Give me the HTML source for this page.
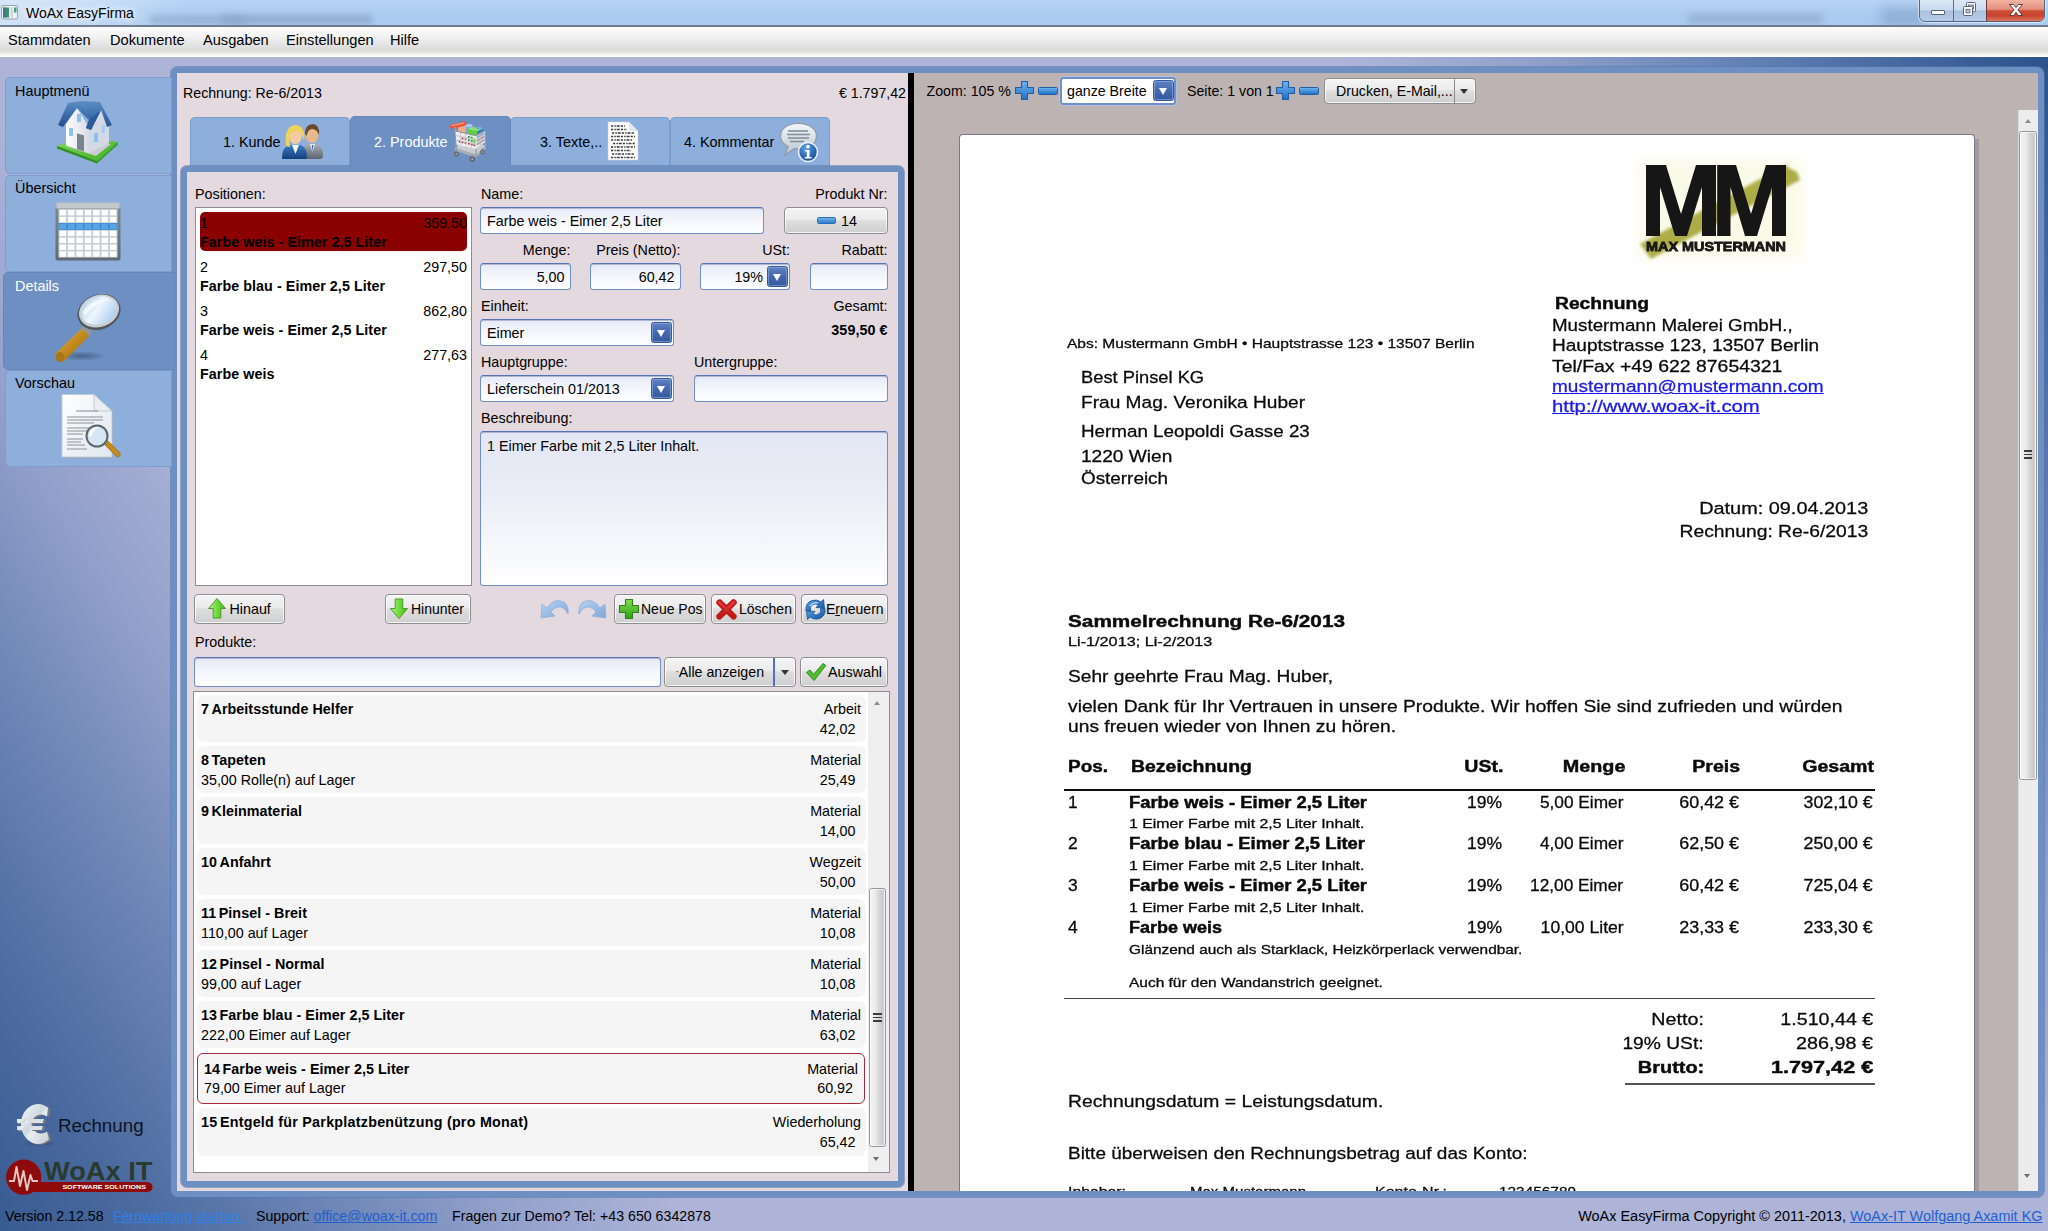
<!DOCTYPE html>
<html>
<head>
<meta charset="utf-8">
<title>WoAx EasyFirma</title>
<style>
*{box-sizing:border-box;}
html,body{margin:0;padding:0;}
body{width:2048px;height:1231px;overflow:hidden;position:relative;font-family:"Liberation Sans",sans-serif;font-size:14.3px;color:#000;background:#aeb4d8;}
.a{position:absolute;}
.t{position:absolute;white-space:nowrap;line-height:20px;height:20px;}
.r{text-align:right;}
.b{font-weight:bold;}
.t.b{letter-spacing:.06px;}
/* chrome */
#titlebar{left:0;top:0;width:2048px;height:26px;overflow:hidden;background:linear-gradient(to right,rgba(255,255,255,.45) 0,rgba(255,255,255,.28) 90px,rgba(255,255,255,0) 190px),linear-gradient(to bottom,#b7d4f5 0,#adcdf1 45%,#a9caef 100%);}
#titleline{left:0;top:25px;width:2048px;height:2px;background:#6e7b8c;}
#menubar{left:0;top:27px;width:2048px;height:30px;background:linear-gradient(to bottom,#fbfbfb 0,#f3f3f3 30%,#e4e3e3 60%,#dcdbda 78%,#f0f0f0 90%,#ffffff 100%);}
/* background pieces */
#bg{left:0;top:57px;width:2048px;height:1174px;background:linear-gradient(58.3deg,#385b92 0,#4d6ca0 140px,#6f87b7 300px,#919fca 430px,#aeb4d8 590px,#aeb4d8 calc(100% - 600px),#93a2cc calc(100% - 450px),#6d88b9 calc(100% - 300px),#4a6ca3 calc(100% - 150px),#2b538b 100%);}
/* frames */
.frame{border:6px solid #6d8fc1;border-radius:7px;box-shadow:0 0 0 1px rgba(84,116,170,.55);}
#outer{left:171px;top:67px;width:1873px;height:1130px;background:#bdb3b3;}
#leftbg{left:177px;top:73px;width:731px;height:1118px;background:#e4d9de;}
#splitter{left:908px;top:73px;width:6px;height:1118px;background:#000;}
#inner{left:180.5px;top:166px;width:723.5px;height:1021px;background:#e4d9de;border-radius:6px;}
/* sidebar */
.sb{left:5px;width:167px;height:97px;background:#8eaedc;border:1px solid #7d9dcf;border-radius:5px 0 0 5px;}
.sb.sel{left:3px;width:172px;background:#6d8fc1;border-color:#6486b9;}
/* tabs */
.tab{top:117px;height:50px;width:160px;background:#8eaedc;border:1px solid #7a9ccf;border-bottom:none;border-radius:5px 5px 0 0;}
.tab.sel{top:116px;height:53px;background:#6d8fc1;border-color:#6587ba;}
/* inputs */
.in{height:27px;border:1.5px solid #6f8fcb;border-top-color:#5673b6;border-radius:3.5px;background:linear-gradient(to bottom,#e6eaf6 0,#f3f5fb 45%,#ffffff 100%);box-shadow:inset 0 1px 0 rgba(70,90,150,.35);}
.dd{width:21px;height:21px;border-radius:2.5px;background:linear-gradient(to bottom,#5f83c3 0,#4469ae 50%,#35589c 100%);border:1px solid #38589a;box-shadow:inset 0 0 0 1px rgba(150,180,230,.55);}
.dd:after{content:"";position:absolute;left:5px;top:6.5px;border:4.5px solid transparent;border-top:7px solid #fff;border-bottom:none;}
.btn{height:30px;border:1px solid #8e8e90;border-radius:4px;background:linear-gradient(to bottom,#f4f4f4 0,#ebebeb 45%,#dedede 50%,#cfcfcf 100%);box-shadow:inset 0 0 0 1px rgba(255,255,255,.75);}
.prow{left:196.5px;width:669.5px;height:47.5px;background:#f5f5f5;border-radius:7px;}
.sthumb{border:1px solid #979797;border-radius:2.5px;background:linear-gradient(to right,#f3f3f3 0,#ececec 35%,#d7d7d8 60%,#c9c9cb 85%,#dcdcdc 100%);box-shadow:inset 0 0 0 1px rgba(255,255,255,.6);}
.grip{width:8.5px;height:9px;background:linear-gradient(to bottom,#3c3c3c 0,#3c3c3c 1.6px,transparent 1.6px,transparent 3.6px,#3c3c3c 3.6px,#3c3c3c 5.2px,transparent 5.2px,transparent 7.2px,#3c3c3c 7.2px,#3c3c3c 8.8px,transparent 8.8px);}
.d{position:absolute;white-space:pre;line-height:20px;height:20px;color:#0a0a0a;-webkit-text-stroke:.28px currentColor;}
.d.b{-webkit-text-stroke:.45px currentColor;}
</style>
</head>
<body>
<!-- window chrome -->
<div class="a" id="titlebar"><div class="a" style="left:150px;top:16px;width:95px;height:8px;background:#8da8ca;filter:blur(3px);opacity:.75"></div><div class="a" style="left:222px;top:15px;width:150px;height:9px;background:#8aa5c8;filter:blur(3px);opacity:.8"></div><div class="a" style="left:1688px;top:14px;width:135px;height:9px;background:#8ea9cc;filter:blur(3.5px);opacity:.75"></div><div class="a" style="left:1880px;top:8px;width:45px;height:18px;background:#7f9cc4;filter:blur(6px);opacity:.6"></div></div>
<div class="a" id="titleline"></div>
<div class="a" id="menubar"></div>
<div class="a" id="bg"></div>

<!-- title -->
<svg class="a" style="left:1px;top:4px" width="18" height="17" viewBox="0 0 18 17"><rect x="0.5" y="1.5" width="16" height="13.5" rx="1.5" fill="#eef1f4" stroke="#9aa3ad"/><rect x="2" y="3.5" width="6" height="10" fill="#3f8f6a"/><rect x="2" y="3.5" width="3" height="10" fill="#3b6fa8" opacity=".7"/><rect x="9.5" y="3.5" width="2.5" height="10" fill="#cfd6dc"/><rect x="13" y="3.5" width="2.5" height="5" fill="#4f9a78"/></svg>
<div class="t" style="left:26px;top:3px;font-size:14px;text-shadow:0 0 6px #fff,0 0 10px #fff">WoAx EasyFirma</div>
<div class="a" style="left:1919px;top:-1px;width:126px;height:23px;border:1px solid #54647a;border-radius:0 0 6px 6px;overflow:hidden;box-shadow:0 0 0 1px rgba(255,255,255,.55)">
 <div class="a" style="left:0;top:0;width:34px;height:22px;background:linear-gradient(to bottom,#dde8f5 0,#c9daef 45%,#a9c0de 50%,#b9cde8 100%);border-right:1px solid #5f6f86"></div>
 <div class="a" style="left:34px;top:0;width:33px;height:22px;background:linear-gradient(to bottom,#dde8f5 0,#c9daef 45%,#a9c0de 50%,#b9cde8 100%);border-right:1px solid #6a3a38"></div>
 <div class="a" style="left:67px;top:0;width:58px;height:22px;background:linear-gradient(to bottom,#f2b2a4 0,#e58f7e 42%,#cd4a33 50%,#c9452f 72%,#e2806a 100%)"></div>
 <div class="a" style="left:11px;top:9.5px;width:14px;height:5px;background:#fff;border:1px solid #56627a;border-radius:1px"></div>
 <svg class="a" style="left:41px;top:1px" width="17" height="17" viewBox="0 0 17 17"><rect x="5.5" y="1.5" width="9" height="9" rx="1" fill="#fff" stroke="#56627a"/><rect x="7.5" y="4" width="5" height="4" fill="#b4c6df" stroke="#56627a" stroke-width=".8"/><rect x="2.5" y="5.5" width="9" height="9" rx="1" fill="#fff" stroke="#56627a"/><rect x="5" y="8.3" width="4" height="3.6" fill="#b4c6df" stroke="#56627a" stroke-width=".8"/></svg>
 <svg class="a" style="left:88px;top:3px" width="16" height="14" viewBox="0 0 16 14"><path d="M1.5 1.5h4l2.5 3 2.5-3h4l-4.6 5.4 4.6 5.6h-4l-2.5-3.2-2.5 3.2h-4l4.6-5.6z" fill="#fff" stroke="#5a4040" stroke-width="1"/></svg>
</div>
<!-- menu -->
<div class="t" style="left:8px;top:30px;font-size:14.6px">Stammdaten</div>
<div class="t" style="left:110px;top:30px;font-size:14.6px">Dokumente</div>
<div class="t" style="left:203px;top:30px;font-size:14.6px">Ausgaben</div>
<div class="t" style="left:286px;top:30px;font-size:14.6px">Einstellungen</div>
<div class="t" style="left:390px;top:30px;font-size:14.6px">Hilfe</div>


<!-- frames -->
<div class="a frame" id="outer"></div>
<div class="a" id="leftbg"></div>
<div class="a" id="splitter"></div>

<!-- sidebar -->
<div class="a sb" style="top:77px"></div>
<div class="a sb" style="top:175px"></div>
<div class="a sb sel" style="top:272px;height:98px"></div>
<div class="a sb" style="top:370px"></div>
<div class="t" style="left:15px;top:81px;font-size:14.4px">Hauptmenü</div>
<div class="t" style="left:15px;top:178px;font-size:14.4px">Übersicht</div>
<div class="t" style="left:15px;top:276px;font-size:14.4px;color:#fff">Details</div>
<div class="t" style="left:15px;top:373px;font-size:14.4px">Vorschau</div>
<!-- house -->
<svg class="a" style="left:55px;top:100px" width="66" height="64" viewBox="0 0 66 64">
 <defs><linearGradient id="hg" x1="0" y1="0" x2="1" y2="1"><stop offset="0" stop-color="#7edb4a"/><stop offset="1" stop-color="#3fae28"/></linearGradient>
 <linearGradient id="hr" x1="0" y1="0" x2="0" y2="1"><stop offset="0" stop-color="#5c8fc6"/><stop offset="1" stop-color="#1f4f8c"/></linearGradient>
 <linearGradient id="hw" x1="0" y1="0" x2="1" y2="0"><stop offset="0" stop-color="#ffffff"/><stop offset="1" stop-color="#d5dbe6"/></linearGradient></defs>
 <path d="M2 46 L25 38 L63 42 L42 61 Z" fill="url(#hg)"/>
 <path d="M2 46 L42 61 L42 63.5 L2 48.5Z" fill="#2f8f1f"/><path d="M42 61 L63 42 L63 44.5 L42 63.5Z" fill="#36a024"/>
 <path d="M10 46 L26 41 L56 44 L41 56Z" fill="#c9cdd2"/>
 <path d="M11 24 L11 45 L34 53 L34 27 L22 8Z" fill="url(#hw)"/>
 <path d="M34 27 L34 53 L54 43 L54 24 L46 10Z" fill="#d3d9e4"/>
 <path d="M13 3 L27 1 L34 20 L22 8 L8 27 L3 25Z" fill="url(#hr)"/>
 <path d="M27 1 L45 2 L57 25 L52 27 L46 10 L36 30 L31 28 L34 20Z" fill="url(#hr)"/>
 <path d="M34 20 L46 10 L36 30 L31 28Z" fill="#2a5c9c"/>
 <rect x="22" y="33" width="7" height="16" fill="#7b838e" transform="skewY(18) translate(0,-7)"/>
 <rect x="14" y="28" width="4" height="8" fill="#8ec1f0"/><rect x="22" y="14" width="4" height="8" fill="#8ec1f0"/><rect x="39" y="33" width="4" height="9" fill="#8ec1f0"/><rect x="47" y="25" width="3" height="8" fill="#a9cdf0"/>
</svg>
<!-- calendar -->
<svg class="a" style="left:55px;top:202px" width="67" height="60" viewBox="0 0 67 60">
 <defs><linearGradient id="cg" x1="0" y1="0" x2="0" y2="1"><stop offset="0" stop-color="#bfc6cb"/><stop offset=".12" stop-color="#7d878f"/><stop offset="1" stop-color="#5f6a73"/></linearGradient></defs>
 <rect x="0.5" y="0.5" width="65" height="58" rx="2" fill="url(#cg)"/>
 <rect x="1.5" y="1.5" width="63" height="5" fill="#c3c9ce"/>
 <rect x="3.5" y="7" width="59" height="48.5" fill="#c5ccd1"/>
 <g fill="#fbfcfc"><rect x="4.5" y="8.0" width="6.6" height="5.4"/><rect x="12.9" y="8.0" width="6.6" height="5.4"/><rect x="21.3" y="8.0" width="6.6" height="5.4"/><rect x="29.7" y="8.0" width="6.6" height="5.4"/><rect x="38.1" y="8.0" width="6.6" height="5.4"/><rect x="46.5" y="8.0" width="6.6" height="5.4"/><rect x="54.9" y="8.0" width="6.6" height="5.4"/><rect x="4.5" y="14.9" width="6.6" height="5.4"/><rect x="12.9" y="14.9" width="6.6" height="5.4"/><rect x="21.3" y="14.9" width="6.6" height="5.4"/><rect x="29.7" y="14.9" width="6.6" height="5.4"/><rect x="38.1" y="14.9" width="6.6" height="5.4"/><rect x="46.5" y="14.9" width="6.6" height="5.4"/><rect x="54.9" y="14.9" width="6.6" height="5.4"/><rect x="4.5" y="28.7" width="6.6" height="5.4"/><rect x="12.9" y="28.7" width="6.6" height="5.4"/><rect x="21.3" y="28.7" width="6.6" height="5.4"/><rect x="29.7" y="28.7" width="6.6" height="5.4"/><rect x="38.1" y="28.7" width="6.6" height="5.4"/><rect x="46.5" y="28.7" width="6.6" height="5.4"/><rect x="54.9" y="28.7" width="6.6" height="5.4"/><rect x="4.5" y="35.6" width="6.6" height="5.4"/><rect x="12.9" y="35.6" width="6.6" height="5.4"/><rect x="21.3" y="35.6" width="6.6" height="5.4"/><rect x="29.7" y="35.6" width="6.6" height="5.4"/><rect x="38.1" y="35.6" width="6.6" height="5.4"/><rect x="46.5" y="35.6" width="6.6" height="5.4"/><rect x="54.9" y="35.6" width="6.6" height="5.4"/><rect x="4.5" y="42.5" width="6.6" height="5.4"/><rect x="12.9" y="42.5" width="6.6" height="5.4"/><rect x="21.3" y="42.5" width="6.6" height="5.4"/><rect x="29.7" y="42.5" width="6.6" height="5.4"/><rect x="38.1" y="42.5" width="6.6" height="5.4"/><rect x="46.5" y="42.5" width="6.6" height="5.4"/><rect x="54.9" y="42.5" width="6.6" height="5.4"/><rect x="4.5" y="49.4" width="6.6" height="5.4"/><rect x="12.9" y="49.4" width="6.6" height="5.4"/><rect x="21.3" y="49.4" width="6.6" height="5.4"/><rect x="29.7" y="49.4" width="6.6" height="5.4"/><rect x="38.1" y="49.4" width="6.6" height="5.4"/><rect x="46.5" y="49.4" width="6.6" height="5.4"/><rect x="54.9" y="49.4" width="6.6" height="5.4"/></g>
 <rect x="3.5" y="21" width="59" height="7" fill="#3f8fd8"/>
 <g fill="#5aa3e4"><rect x="4.5" y="21.9" width="6.6" height="5.4"/><rect x="12.9" y="21.9" width="6.6" height="5.4"/><rect x="21.3" y="21.9" width="6.6" height="5.4"/><rect x="29.7" y="21.9" width="6.6" height="5.4"/><rect x="38.1" y="21.9" width="6.6" height="5.4"/><rect x="46.5" y="21.9" width="6.6" height="5.4"/><rect x="54.9" y="21.9" width="6.6" height="5.4"/></g>
</svg>
<!-- magnifier -->
<svg class="a" style="left:52px;top:292px" width="74" height="72" viewBox="0 0 74 72">
 <defs><linearGradient id="mh" x1="0" y1="0" x2="1" y2="1"><stop offset="0" stop-color="#e8b548"/><stop offset=".5" stop-color="#c48a1c"/><stop offset="1" stop-color="#8a5c10"/></linearGradient>
 <linearGradient id="ml" x1="0" y1="0" x2="1" y2="1"><stop offset="0" stop-color="#a9cdf2"/><stop offset=".45" stop-color="#eef6fd"/><stop offset="1" stop-color="#9cc4ee"/></linearGradient>
 <radialGradient id="ms" cx=".5" cy=".5" r=".5"><stop offset="0" stop-color="#1d2f4a" stop-opacity=".45"/><stop offset="1" stop-color="#1d2f4a" stop-opacity="0"/></radialGradient></defs>
 <ellipse cx="30" cy="64" rx="24" ry="5" fill="url(#ms)"/>
 <path d="M30 36 L38 43 L13 68 Q7 72 4 66 Q2 62 6 59Z" fill="url(#mh)"/>
 <ellipse cx="8" cy="65" rx="4.5" ry="5" fill="#a87518"/>
 <path d="M29 35 L36 29 L42 36 L37 44Z" fill="#8f979e"/>
 <ellipse cx="47" cy="20" rx="22" ry="17.5" transform="rotate(-20 47 20)" fill="#4e565e"/>
 <ellipse cx="47" cy="19" rx="20.5" ry="16" transform="rotate(-20 47 19)" fill="#c9ced3"/>
 <ellipse cx="47" cy="18.5" rx="18" ry="13.5" transform="rotate(-20 47 18.5)" fill="url(#ml)"/>
 <path d="M31 20 Q40 5 60 8 Q45 8 33 24Z" fill="#fff" opacity=".7"/>
</svg>
<!-- doc preview -->
<svg class="a" style="left:60px;top:393px" width="62" height="68" viewBox="0 0 62 68">
 <defs><linearGradient id="dg" x1="0" y1="0" x2="1" y2="1"><stop offset="0" stop-color="#ffffff"/><stop offset="1" stop-color="#dfe6ee"/></linearGradient></defs>
 <path d="M2 1.5 H34 L52 18 V64 H2Z" fill="#9aa2aa" opacity=".5" transform="translate(1,1.5)"/>
 <path d="M2 1.5 H34 L52 18 V64 H2Z" fill="url(#dg)" stroke="#c2c8cf" stroke-width=".8"/>
 <path d="M34 1.5 L52 18 H36 Q34 18 34 16Z" fill="#e9eef3" stroke="#b8bfc7" stroke-width=".8"/>
 <g stroke="#8c9299" stroke-width="1.1"><path d="M16 18h22"/><path d="M7 24h36M7 27h36M7 30h27M7 35h38M7 38h34M7 41h16M7 46h16M7 49h14M7 52h18M7 56h20"/></g>
 <path d="M43 50 L47 47 L60 60 Q61 64 57 64Z" fill="#c48a1c" stroke="#8a5c10" stroke-width=".6"/>
 <circle cx="37" cy="43" r="11.5" fill="#5d656d"/><circle cx="37" cy="43" r="9.5" fill="#d7e6f5"/><path d="M29 42 Q31 34 40 34 Q33 36 31 44Z" fill="#fff"/>
</svg>


<!-- header -->
<div class="t" style="left:183px;top:83px;font-size:14.2px">Rechnung: Re-6/2013</div>
<div class="t r" style="left:760px;width:146px;top:83px;font-size:14.2px">€ 1.797,42</div>
<!-- tabs -->
<div class="a tab" style="left:190px"></div>
<div class="a tab" style="left:510px"></div>
<div class="a tab" style="left:670px"></div>
<div class="a frame" id="inner"></div>
<div class="a tab sel" style="left:350px;width:161px"></div>
<div class="t" style="left:223px;top:132px;font-size:14.4px">1. Kunde</div>
<div class="t" style="left:374px;top:132px;font-size:14.4px;color:#fff">2. Produkte</div>
<div class="t" style="left:540px;top:132px;font-size:14.4px">3. Texte,..</div>
<div class="t" style="left:684px;top:132px;font-size:14.4px">4. Kommentar</div>
<!-- people -->
<svg class="a" style="left:281px;top:122px" width="43" height="38" viewBox="0 0 43 38">
 <defs><linearGradient id="pb" x1="0" y1="0" x2="0" y2="1"><stop offset="0" stop-color="#3d7cc4"/><stop offset="1" stop-color="#123f7c"/></linearGradient>
 <linearGradient id="pg" x1="0" y1="0" x2="0" y2="1"><stop offset="0" stop-color="#a9b0b8"/><stop offset="1" stop-color="#5b636c"/></linearGradient></defs>
 <path d="M20 37 Q20 24 27 22 L36 22 Q42 24 42 34 Q42 37 38 37Z" fill="url(#pg)"/>
 <path d="M29 22 L31.5 30 L34 22Z" fill="#e9eef4"/><path d="M30.8 23 L31.5 30 L32.4 23Z" fill="#2f6ab4"/>
 <ellipse cx="31" cy="13" rx="6.5" ry="8" fill="#e8b98c"/>
 <path d="M24 12 Q24 2 32 2 Q39 3 38 13 Q36 7 31 7 Q27 7 25.5 14Z" fill="#6b4a2a"/>
 <path d="M1 37 Q1 25 8 23 L20 23 Q26 26 26 35 Q26 37 23 37Z" fill="url(#pb)"/>
 <path d="M11 23 L14.5 32 L18 23Z" fill="#f2f5f8"/>
 <ellipse cx="14.5" cy="14" rx="6.5" ry="8" fill="#f2cba2"/>
 <path d="M5 24 Q3 10 9 5 Q14 1 20 5 Q25 10 23 20 Q22 12 18 9 Q12 9 9 13 Q8 20 9 25Z" fill="#f0d35a"/>
</svg>
<!-- cart -->
<svg class="a" style="left:449px;top:119px" width="40" height="44" viewBox="0 0 40 44">
 <defs><filter id="cbl"><feGaussianBlur stdDeviation=".35"/></filter></defs>
 <g filter="url(#cbl)">
 <path d="M6 29 L27 35.5 L37 27 L36.5 30.5 L27 38.5 L5.5 31.5Z" fill="#a9aeb5"/>
 <path d="M6 29 L27 35.5 L37 27 L30 24 L10 25Z" fill="#c9cdd2"/>
 <path d="M6.5 12 L7.5 31 M27 17 L27 38 M36 12 L36.5 29" stroke="#9a9fa6" stroke-width="1.4" fill="none"/>
 <path d="M9 6.5 L17.5 8 L17.5 16 L9 14Z" fill="#f3a988"/><path d="M9 6.5 L13 5.5 L21 7 L17.5 8Z" fill="#f9cdb4"/>
 <path d="M16.8 7.5 Q20 4.5 23.5 7 L23.5 14 L16.8 14Z" fill="#7aa6dc"/><ellipse cx="20.2" cy="6.6" rx="3.4" ry="1.8" fill="#a9c8ea"/>
 <path d="M18 10 L28.5 12.2 L28.5 21 L18 19Z" fill="#5fcf3a"/><path d="M18 10 L24 8 L34.5 9.6 L28.5 12.2Z" fill="#8fe56c"/>
 <path d="M28.5 12.2 L34.5 9.6 L34.5 21 L28.5 23.5Z" fill="#2b78c6"/><path d="M26 8.5 L31 7.2 L34.5 9.6 L28.5 10.5Z" fill="#6aa8e2"/>
 <path d="M6.5 12 L27 16.5 L27 30 L7.5 25.5Z" fill="#f4f4f5" opacity=".93"/>
 <path d="M27 16.5 L36 11.5 L36 23.5 L27 30Z" fill="#dfe4ea" opacity=".9"/>
 <g fill="#b32222"><circle cx="10.5" cy="22.5" r="1"/><circle cx="13.5" cy="23.3" r="1"/><circle cx="16.5" cy="24" r="1"/><circle cx="13.5" cy="19.5" r=".9"/><circle cx="16.5" cy="20.2" r=".9"/><circle cx="19.8" cy="24.8" r="1"/><circle cx="22.8" cy="25.5" r="1"/><circle cx="25.2" cy="26.2" r="1"/></g>
 <g fill="#1f8a1f"><circle cx="19.8" cy="18" r="1"/><circle cx="22.8" cy="18.7" r="1"/><circle cx="19.8" cy="21.3" r="1"/><circle cx="22.8" cy="22" r="1"/></g>
 <g fill="#6fd04a"><rect x="24.3" y="19.5" width="2.2" height="5"/></g>
 <path d="M28 22 L35.5 17.5 M28 25.5 L35.5 20.5" stroke="#c0504a" stroke-width="1.2" opacity=".7"/>
 <path d="M28 18.5 L35.5 14" stroke="#6a9ad0" stroke-width="1.6" opacity=".7"/>
 <g stroke="#b9bec5" stroke-width=".8" fill="none"><path d="M6.8 16.5 L27 21 L36 15.5 M7 21 L27 25.5 L36 19.5 M11.5 13 L12 26.5 M16.5 14 L17 27.7 M21.8 15.3 L22 28.8 M31.5 14 L31.5 26.8"/></g>
 <path d="M6.5 12 L27 16.5 L36 11.5" stroke="#8f959c" stroke-width="1.2" fill="none"/>
 <path d="M2.8 7.6 L15.5 4.6" stroke="#e4563c" stroke-width="4.2" stroke-linecap="round"/><path d="M3 6.6 L15 3.8" stroke="#f59a80" stroke-width="1.2" stroke-linecap="round"/>
 <path d="M6 8 L6.5 12" stroke="#9a9fa6" stroke-width="1.6"/>
 <circle cx="7.3" cy="35" r="2.5" fill="#5f666e"/><circle cx="7.3" cy="35" r="1" fill="#aeb4ba"/>
 <circle cx="23.3" cy="40" r="2.7" fill="#5f666e"/><circle cx="23.3" cy="40" r="1.1" fill="#aeb4ba"/>
 <circle cx="33.5" cy="33" r="2.3" fill="#5f666e"/><circle cx="33.5" cy="33" r=".9" fill="#aeb4ba"/>
 <path d="M7.3 31.5 V33 M23.3 36.5 V38 M33.5 29.5 V31" stroke="#7d838a" stroke-width="1.6"/>
 </g>
</svg>
<!-- text doc -->
<svg class="a" style="left:607px;top:121px" width="32" height="40" viewBox="0 0 32 40">
 <path d="M1 1 H22 L31 10 V39 H1Z" fill="#fff" stroke="#c9ced6" stroke-width=".6"/><path d="M22 1 L31 10 H22Z" fill="#e3e7ee"/>
 <g stroke="#3a3a3a" stroke-width="1.3" stroke-dasharray="2.2 1.2 1.4 .9 3 1.1"><path d="M4 5h14M4 8.5h16M5 12h22M4 15.5h24M4 19h21M6 22.5h22M4 26h24M4 29.5h20M5 33h22M4 36.5h24"/></g>
</svg>
<!-- comment info -->
<svg class="a" style="left:779px;top:122px" width="41" height="41" viewBox="0 0 41 41">
 <defs><linearGradient id="cb" x1="0" y1="0" x2="0" y2="1"><stop offset="0" stop-color="#f4f7f9"/><stop offset="1" stop-color="#b9c5cf"/></linearGradient>
 <radialGradient id="ci" cx=".4" cy=".3" r=".8"><stop offset="0" stop-color="#5aa0e6"/><stop offset="1" stop-color="#0d3f86"/></radialGradient></defs>
 <path d="M19 1.5 C8 1.5 1.5 7 1.5 14 C1.5 19 5 22.5 9 24.5 L6 33 L16 26.5 Q18 27 20 27 C31 27 37.5 21 37.5 14 C37.5 7 30 1.5 19 1.5Z" fill="url(#cb)" stroke="#8d9aa6" stroke-width="1.2"/>
 <g stroke="#7f8b96" stroke-width="1.3"><path d="M9 9h20M8 12.5h23M9 16h21M11 19.5h14"/></g>
 <circle cx="29" cy="30" r="9.5" fill="url(#ci)" stroke="#e9f1fa" stroke-width="1.6"/>
 <circle cx="29" cy="24.6" r="1.9" fill="#fff"/><path d="M26 28 H30.6 V35 H32.6 V36.6 H25.8 V35 H27.8 V29.6 H26Z" fill="#fff"/>
</svg>

<!-- positions -->
<div class="t" style="left:195px;top:184px">Positionen:</div>
<div class="a" style="left:195px;top:207px;width:277px;height:379px;background:#fff;border:1px solid #8a8d94"></div>
<div class="a" style="left:200px;top:212px;width:267px;height:39px;background:#8b0000;border-radius:5px"></div>
<div class="t" style="left:200px;top:213px">1</div><div class="t r" style="left:380px;width:87px;top:213px">359,50</div>
<div class="t b" style="left:200px;top:231.8px">Farbe weis - Eimer 2,5 Liter</div>
<div class="t" style="left:200px;top:257px">2</div><div class="t r" style="left:380px;width:87px;top:257px">297,50</div>
<div class="t b" style="left:200px;top:275.8px">Farbe blau - Eimer 2,5 Liter</div>
<div class="t" style="left:200px;top:301px">3</div><div class="t r" style="left:380px;width:87px;top:301px">862,80</div>
<div class="t b" style="left:200px;top:319.8px">Farbe weis - Eimer 2,5 Liter</div>
<div class="t" style="left:200px;top:345px">4</div><div class="t r" style="left:380px;width:87px;top:345px">277,63</div>
<div class="t b" style="left:200px;top:363.8px">Farbe weis</div>
<!-- form -->
<div class="t" style="left:481px;top:184px">Name:</div>
<div class="t r" style="left:780px;width:107.5px;top:184px">Produkt Nr:</div>
<div class="a in" style="left:480px;top:207px;width:284px"></div>
<div class="t" style="left:487px;top:211px">Farbe weis - Eimer 2,5 Liter</div>
<div class="a btn" style="left:784px;top:207px;width:103.5px;height:27px"></div>
<div class="a" style="left:817px;top:217px;width:19px;height:7px;border-radius:1.5px;background:linear-gradient(to bottom,#6fb0ea,#2f7fd0);border:1px solid #2a6cb4"></div>
<div class="t" style="left:841px;top:211px">14</div>

<div class="t r" style="left:480px;width:90.5px;top:240px">Menge:</div>
<div class="t r" style="left:585px;width:95.5px;top:240px">Preis (Netto):</div>
<div class="t r" style="left:740px;width:50px;top:240px">USt:</div>
<div class="t r" style="left:820px;width:67.5px;top:240px">Rabatt:</div>
<div class="a in" style="left:480px;top:263px;width:90.5px"></div><div class="t r" style="left:480px;width:84.5px;top:267px">5,00</div>
<div class="a in" style="left:590px;top:263px;width:90.5px"></div><div class="t r" style="left:590px;width:84.5px;top:267px">60,42</div>
<div class="a in" style="left:699.5px;top:263px;width:90.5px"></div><div class="t r" style="left:699.5px;width:63.5px;top:267px">19%</div>
<div class="a dd" style="left:766.5px;top:266px"></div>
<div class="a in" style="left:809.5px;top:263px;width:78px"></div>

<div class="t" style="left:481px;top:296px">Einheit:</div>
<div class="t r" style="left:800px;width:87.5px;top:296px">Gesamt:</div>
<div class="a in" style="left:480px;top:319px;width:194px"></div><div class="t" style="left:487px;top:323px">Eimer</div>
<div class="a dd" style="left:650.5px;top:322px"></div>
<div class="t r b" style="left:780px;width:107.5px;top:320px">359,50 €</div>

<div class="t" style="left:481px;top:352px">Hauptgruppe:</div>
<div class="t" style="left:694px;top:352px">Untergruppe:</div>
<div class="a in" style="left:480px;top:375px;width:194px"></div><div class="t" style="left:487px;top:379px">Lieferschein 01/2013</div>
<div class="a dd" style="left:650.5px;top:378px"></div>
<div class="a in" style="left:694px;top:375px;width:193.5px"></div>

<div class="t" style="left:481px;top:408px">Beschreibung:</div>
<div class="a in" style="left:480px;top:431px;width:407.5px;height:155px;background:linear-gradient(to bottom,#e3e7f4 0,#e9ecf6 35%,#f6f7fb 75%,#ffffff 100%)"></div>
<div class="t" style="left:487px;top:436px">1 Eimer Farbe mit 2,5 Liter Inhalt.</div>
<!-- buttons row -->
<div class="a btn" style="left:194px;top:594px;width:91px"></div>
<svg class="a" style="left:207px;top:597px" width="20" height="23" viewBox="0 0 20 23"><defs><linearGradient id="ga" x1="0" y1="0" x2="1" y2="0"><stop offset="0" stop-color="#b9f28a"/><stop offset=".5" stop-color="#6fdc3c"/><stop offset="1" stop-color="#3fb51f"/></linearGradient></defs><path d="M10 1.5 L18.5 11.5 H13.8 V21 H6.2 V11.5 H1.5Z" fill="url(#ga)" stroke="#4a9b2b" stroke-width="1" stroke-linejoin="round"/></svg>
<div class="t" style="left:229.5px;top:599px">Hinauf</div>
<div class="a btn" style="left:385px;top:594px;width:86px"></div>
<svg class="a" style="left:388.5px;top:597px" width="20" height="23" viewBox="0 0 20 23"><path d="M10 21.5 L18.5 11.5 H13.8 V2 H6.2 V11.5 H1.5Z" fill="url(#ga)" stroke="#4a9b2b" stroke-width="1" stroke-linejoin="round"/></svg>
<div class="t" style="left:411px;top:599px;font-size:14px">Hinunter</div>
<svg class="a" style="left:539px;top:596px" width="31" height="25" viewBox="0 0 31 25"><defs><linearGradient id="ua" x1="0" y1="0" x2="1" y2="1"><stop offset="0" stop-color="#b7d2f0"/><stop offset="1" stop-color="#7ea6d8"/></linearGradient></defs><path d="M2 22 L3 8 L8 12 Q15 1 25 6 Q30 10 29 18 Q25 10 19 11 Q14 12 12 16 L16 20Z" fill="url(#ua)" stroke="#8fb0da" stroke-width=".8"/></svg>
<svg class="a" style="left:577px;top:596px" width="31" height="25" viewBox="0 0 31 25"><path d="M29 22 L28 8 L23 12 Q16 1 6 6 Q1 10 2 18 Q6 10 12 11 Q17 12 19 16 L15 20Z" fill="url(#ua)" stroke="#8fb0da" stroke-width=".8"/></svg>
<div class="a btn" style="left:614px;top:594px;width:91.5px"></div>
<svg class="a" style="left:618px;top:598px" width="22" height="22" viewBox="0 0 22 22"><defs><linearGradient id="gp" x1="0" y1="0" x2="0" y2="1"><stop offset="0" stop-color="#7fe04c"/><stop offset="1" stop-color="#2f9d1c"/></linearGradient></defs><path d="M7.5 1.5 H14.5 V7.5 H20.5 V14.5 H14.5 V20.5 H7.5 V14.5 H1.5 V7.5 H7.5Z" fill="url(#gp)" stroke="#2f7f1e" stroke-width="1.1" stroke-linejoin="round"/></svg>
<div class="t" style="left:641px;top:599px;font-size:14px">Neue Pos</div>
<div class="a btn" style="left:711px;top:594px;width:84.5px"></div>
<svg class="a" style="left:716px;top:598.5px" width="21" height="21" viewBox="0 0 21 21"><defs><linearGradient id="rx" x1="0" y1="0" x2="0" y2="1"><stop offset="0" stop-color="#f04a4a"/><stop offset="1" stop-color="#b80f0f"/></linearGradient></defs><g stroke="#c21a1a" stroke-width="2" stroke-linejoin="round" fill="url(#rx)"><path d="M4.2 1.2 L10.5 7.3 L16.8 1.2 Q18.3 .8 19.6 2.4 Q20.2 3.6 19.6 4.4 L13.6 10.5 L19.6 16.6 Q20.2 17.6 19.2 18.9 Q18 20 16.8 19.6 L10.5 13.6 L4.2 19.6 Q3 20 1.8 18.9 Q.8 17.6 1.4 16.6 L7.4 10.5 L1.4 4.4 Q.8 3.4 1.8 2.2 Q3 .9 4.2 1.2Z"/></g></svg>
<div class="t" style="left:739px;top:599px;font-size:14px">Löschen</div>
<div class="a btn" style="left:801px;top:594px;width:86.5px"></div>
<svg class="a" style="left:803.5px;top:597.5px" width="23" height="23" viewBox="0 0 23 23"><defs><linearGradient id="rf" x1="0" y1="0" x2="1" y2="1"><stop offset="0" stop-color="#5aa6ea"/><stop offset="1" stop-color="#0f4f9e"/></linearGradient></defs><path d="M2 13 Q1 5 8 2.5 Q13 1 17 4 L19.5 1.5 L20.5 10 L12 9.5 L14.5 7 Q11 5 8 7 Q5.5 9.5 6.5 13Z" fill="url(#rf)" stroke="#154f96" stroke-width=".8"/><path d="M21 10.5 Q22 18 15 20.8 Q10 22 6 19 L3.5 21.5 L2.5 13 L11 13.5 L8.5 16 Q12 18 15 16 Q17.5 13.8 16.5 10.5Z" fill="url(#rf)" stroke="#154f96" stroke-width=".8"/><path d="M6 8 Q9 4 14 5" stroke="#bcdcf8" stroke-width="1.6" fill="none" opacity=".8"/></svg>
<div class="t" style="left:826px;top:599px;font-size:14px">E<span style="text-decoration:underline">r</span>neuern</div>
<!-- product search -->
<div class="t" style="left:195px;top:632px">Produkte:</div>
<div class="a in" style="left:194px;top:657px;width:467px;height:30px"></div>
<div class="a btn" style="left:664px;top:657px;width:132px"></div>
<div class="a" style="left:773.4px;top:658px;width:2px;height:28px;background:#4a72c6"></div>
<div class="t" style="left:675.5px;top:662px;font-size:14.2px"><span style="font-size:10px;position:relative;top:-2px">·</span>Alle anzeigen</div>
<div class="a" style="left:780.5px;top:670px;border:4.5px solid transparent;border-top:5px solid #333;border-bottom:none"></div>
<div class="a btn" style="left:800px;top:657px;width:87.5px"></div>
<svg class="a" style="left:805px;top:662px" width="22" height="20" viewBox="0 0 22 20"><path d="M1.5 10.5 L5 8 L8.5 12.5 L18 1.5 L20.8 3.5 L9 18.5Z" fill="#4fbf2f" stroke="#2d8a18" stroke-width="1" stroke-linejoin="round"/></svg>
<div class="t" style="left:828px;top:662px">Auswahl</div>

<!-- product list -->
<div class="a" style="left:193px;top:690.5px;width:697px;height:482px;background:#fff;border:1px solid #8a8d94"></div>
<div class="a prow" style="top:694.5px"></div>
<div class="t b" style="left:201px;top:699.2px">7<span style="margin-left:2.5px">Arbeitsstunde Helfer</span></div>
<div class="t r" style="left:700px;width:161px;top:699.2px">Arbeit</div>
<div class="t r" style="left:700px;width:155.5px;top:718.7px">42,02</div>
<div class="a prow" style="top:745.5px"></div>
<div class="t b" style="left:201px;top:750.2px">8<span style="margin-left:2.5px">Tapeten</span></div>
<div class="t" style="left:201px;top:769.7px">35,00 Rolle(n) auf Lager</div>
<div class="t r" style="left:700px;width:161px;top:750.2px">Material</div>
<div class="t r" style="left:700px;width:155.5px;top:769.7px">25,49</div>
<div class="a prow" style="top:796.5px"></div>
<div class="t b" style="left:201px;top:801.2px">9<span style="margin-left:2.5px">Kleinmaterial</span></div>
<div class="t r" style="left:700px;width:161px;top:801.2px">Material</div>
<div class="t r" style="left:700px;width:155.5px;top:820.7px">14,00</div>
<div class="a prow" style="top:847.5px"></div>
<div class="t b" style="left:201px;top:852.2px">10<span style="margin-left:2.5px">Anfahrt</span></div>
<div class="t r" style="left:700px;width:161px;top:852.2px">Wegzeit</div>
<div class="t r" style="left:700px;width:155.5px;top:871.7px">50,00</div>
<div class="a prow" style="top:898.5px"></div>
<div class="t b" style="left:201px;top:903.2px">11<span style="margin-left:2.5px">Pinsel - Breit</span></div>
<div class="t" style="left:201px;top:922.7px">110,00 auf Lager</div>
<div class="t r" style="left:700px;width:161px;top:903.2px">Material</div>
<div class="t r" style="left:700px;width:155.5px;top:922.7px">10,08</div>
<div class="a prow" style="top:949.5px"></div>
<div class="t b" style="left:201px;top:954.2px">12<span style="margin-left:2.5px">Pinsel - Normal</span></div>
<div class="t" style="left:201px;top:973.7px">99,00 auf Lager</div>
<div class="t r" style="left:700px;width:161px;top:954.2px">Material</div>
<div class="t r" style="left:700px;width:155.5px;top:973.7px">10,08</div>
<div class="a prow" style="top:1000.5px"></div>
<div class="t b" style="left:201px;top:1005.2px">13<span style="margin-left:2.5px">Farbe blau - Eimer 2,5 Liter</span></div>
<div class="t" style="left:201px;top:1024.7px">222,00 Eimer auf Lager</div>
<div class="t r" style="left:700px;width:161px;top:1005.2px">Material</div>
<div class="t r" style="left:700px;width:155.5px;top:1024.7px">63,02</div>
<div class="a" style="left:197px;top:1052.5px;width:667.5px;height:51.5px;background:#f5f5f5;border:1.6px solid #a8283a;border-radius:6px"></div>
<div class="t b" style="left:204px;top:1059px">14<span style="margin-left:2.5px">Farbe weis - Eimer 2,5 Liter</span></div>
<div class="t" style="left:204px;top:1078.3px">79,00 Eimer auf Lager</div>
<div class="t r" style="left:700px;width:158px;top:1059px">Material</div>
<div class="t r" style="left:700px;width:153px;top:1078.3px">60,92</div>
<div class="a prow" style="top:1107.7px;height:48.3px"></div>
<div class="t b" style="left:201px;top:1112.2px;letter-spacing:.25px">15<span style="margin-left:2.5px">Entgeld für Parkplatzbenützung (pro Monat)</span></div>
<div class="t r" style="left:700px;width:161px;top:1112.2px">Wiederholung</div>
<div class="t r" style="left:700px;width:155.5px;top:1131.5px">65,42</div>
<div class="a" style="left:867.5px;top:691.5px;width:21.5px;height:480px;background:#efefef"></div>
<div class="a" style="left:873.5px;top:701px;border:3.5px solid transparent;border-bottom:4px solid #8b8b8b;border-top:none"></div>
<div class="a" style="left:873.2px;top:1156.5px;border:3.7px solid transparent;border-top:4.2px solid #6e6e6e;border-bottom:none"></div>
<div class="a sthumb" style="left:868.5px;top:888px;width:17px;height:259px"></div>
<div class="a grip" style="left:873px;top:1013px"></div>



<!-- right toolbar -->
<div class="t" style="left:926.5px;top:81px;font-size:14.2px">Zoom: 105 %</div>
<svg class="a" style="left:1014px;top:80px" width="21" height="21" viewBox="0 0 21 21"><defs><linearGradient id="bp" x1="0" y1="0" x2="0" y2="1"><stop offset="0" stop-color="#6ab4ee"/><stop offset="1" stop-color="#2271c4"/></linearGradient></defs><path d="M7.5 1.5 H13.5 V7.5 H19.5 V13.5 H13.5 V19.5 H7.5 V13.5 H1.5 V7.5 H7.5Z" fill="url(#bp)" stroke="#1f5fa8" stroke-width="1.1" stroke-linejoin="round"/></svg>
<div class="a" style="left:1038px;top:87px;width:19.5px;height:8px;border-radius:1.5px;background:linear-gradient(to bottom,#6ab4ee,#2271c4);border:1px solid #1f5fa8"></div>
<div class="a in" style="left:1060px;top:77px;width:116px;height:27.5px;background:#fff;border:2px solid #6f8fcb;box-shadow:0 0 0 1px rgba(180,195,230,.8)"></div>
<div class="t" style="left:1067px;top:81px;font-size:14.2px">ganze Breite</div>
<div class="a dd" style="left:1153px;top:80px"></div>
<div class="t" style="left:1187px;top:81px;font-size:14.2px">Seite: 1 von 1</div>
<svg class="a" style="left:1274.5px;top:80px" width="21" height="21" viewBox="0 0 21 21"><path d="M7.5 1.5 H13.5 V7.5 H19.5 V13.5 H13.5 V19.5 H7.5 V13.5 H1.5 V7.5 H7.5Z" fill="url(#bp)" stroke="#1f5fa8" stroke-width="1.1" stroke-linejoin="round"/></svg>
<div class="a" style="left:1299px;top:87px;width:19.5px;height:8px;border-radius:1.5px;background:linear-gradient(to bottom,#6ab4ee,#2271c4);border:1px solid #1f5fa8"></div>
<div class="a btn" style="left:1324px;top:78px;width:152px;height:25.5px"></div>
<div class="a" style="left:1453.5px;top:79px;width:1px;height:23.5px;background:#8c8c8c"></div>
<div class="t" style="left:1336px;top:81px;font-size:14.2px">Drucken, E-Mail,...</div>
<div class="a" style="left:1460px;top:88.5px;border:4.5px solid transparent;border-top:5px solid #333;border-bottom:none"></div>
<!-- page -->
<div class="a" style="left:963px;top:139px;width:1016px;height:1052px;background:#a29a9b"></div>
<div class="a" style="left:958.5px;top:134px;width:1016px;height:1057px;background:#fff;border:1px solid #7d768a;border-bottom:none;border-radius:4px 4px 0 0"></div>
<div class="a" id="pageclip" style="left:0;top:0;width:2048px;height:1191px;overflow:hidden">
<!-- logo -->
<svg class="a" style="left:1625px;top:150px" width="190" height="120" viewBox="1625 150 190 120">
 <defs><filter id="bl"><feGaussianBlur stdDeviation="1.4"/></filter><filter id="bl3" x="-20%" y="-20%" width="140%" height="140%"><feGaussianBlur stdDeviation="7"/></filter><filter id="bl2"><feGaussianBlur stdDeviation=".45"/></filter></defs>
 <rect x="1638" y="160" width="165" height="100" fill="#f3f3c4" filter="url(#bl3)" opacity=".38"/>
 <path d="M1640 244 L1651 259 L1716 224 L1800 180 L1797 172 L1789 168 L1786 165 L1716 203 Z" fill="#a9a940" filter="url(#bl)" opacity=".95"/>
 <g filter="url(#bl2)" fill="#141414">
 <path d="M1646 236 V165 H1666 L1681 214 L1696 165 H1716 V236 H1702 V187 L1687 236 H1675 L1660 187 V236Z"/>
 <path d="M1717.2 236 V165 H1736 L1751 214 L1766 165 H1786 V236 H1772 V187 L1757 236 H1745 L1730.5 187 V236Z"/>
 <text x="1646" y="250.6" font-family="Liberation Sans" font-weight="bold" font-size="13.6" textLength="140" lengthAdjust="spacingAndGlyphs" stroke="#141414" stroke-width=".8">MAX MUSTERMANN</text>
 </g>
</svg>
<!-- rules -->
<div class="a" style="left:1064px;top:788.6px;width:811px;height:2.2px;background:#111"></div>
<div class="a" style="left:1064px;top:998px;width:811px;height:1.2px;background:#444"></div>
<div class="a" style="left:1625px;top:1083.2px;width:250px;height:2.2px;background:#555"></div>
<div class="d b" style="left:1554.5px;transform-origin:0 0;top:292.5px;font-size:17.2px;transform:scaleX(1.1198);">Rechnung</div>
<div class="d" style="left:1552.0px;transform-origin:0 0;top:314.5px;font-size:17.2px;transform:scaleX(1.0909);">Mustermann Malerei GmbH.,</div>
<div class="d" style="left:1552.0px;transform-origin:0 0;top:335.3px;font-size:17.2px;transform:scaleX(1.1089);">Hauptstrasse 123, 13507 Berlin</div>
<div class="d" style="left:1552.0px;transform-origin:0 0;top:355.7px;font-size:17.2px;transform:scaleX(1.1292);">Tel/Fax +49 622 87654321</div>
<div class="d" style="left:1552.0px;transform-origin:0 0;top:376.3px;font-size:17.2px;transform:scaleX(1.1056);color:#1a1aee;text-decoration:underline">mustermann@mustermann.com</div>
<div class="d" style="left:1552.0px;transform-origin:0 0;top:395.8px;font-size:17.2px;transform:scaleX(1.1824);color:#1a1aee;text-decoration:underline">http://www.woax-it.com</div>
<div class="d" style="left:1066.8px;transform-origin:0 0;top:333.9px;font-size:12.9px;transform:scaleX(1.2037);">Abs: Mustermann GmbH • Hauptstrasse 123 • 13507 Berlin</div>
<div class="d" style="left:1081.2px;transform-origin:0 0;top:367.4px;font-size:17.2px;transform:scaleX(1.0649);">Best Pinsel KG</div>
<div class="d" style="left:1081.2px;transform-origin:0 0;top:391.7px;font-size:17.2px;transform:scaleX(1.1117);">Frau Mag. Veronika Huber</div>
<div class="d" style="left:1081.2px;transform-origin:0 0;top:421.1px;font-size:17.2px;transform:scaleX(1.0934);">Herman Leopoldi Gasse 23</div>
<div class="d" style="left:1081.2px;transform-origin:0 0;top:445.8px;font-size:17.2px;transform:scaleX(1.1111);">1220 Wien</div>
<div class="d" style="left:1081.2px;transform-origin:0 0;top:468.4px;font-size:17.2px;transform:scaleX(1.0974);">Österreich</div>
<div class="d" style="left:1721.8px;transform-origin:100% 0;top:498.3px;font-size:17.2px;transform:scaleX(1.1559);">Datum: 09.04.2013</div>
<div class="d" style="left:1699.8px;transform-origin:100% 0;top:521.1px;font-size:17.2px;transform:scaleX(1.1220);">Rechnung: Re-6/2013</div>
<div class="d b" style="left:1067.5px;transform-origin:0 0;top:611.3px;font-size:17.2px;transform:scaleX(1.2082);">Sammelrechnung Re-6/2013</div>
<div class="d" style="left:1067.5px;transform-origin:0 0;top:632.3px;font-size:13.2px;transform:scaleX(1.2309);">Li-1/2013; Li-2/2013</div>
<div class="d" style="left:1067.5px;transform-origin:0 0;top:666.4px;font-size:17.2px;transform:scaleX(1.1140);">Sehr geehrte Frau Mag. Huber,</div>
<div class="d" style="left:1067.5px;transform-origin:0 0;top:695.7px;font-size:17.2px;transform:scaleX(1.1202);">vielen Dank für Ihr Vertrauen in unsere Produkte. Wir hoffen Sie sind zufrieden und würden</div>
<div class="d" style="left:1067.5px;transform-origin:0 0;top:716.4px;font-size:17.2px;transform:scaleX(1.1181);">uns freuen wieder von Ihnen zu hören.</div>
<div class="d b" style="left:1067.5px;transform-origin:0 0;top:755.5px;font-size:17.2px;transform:scaleX(1.1020);">Pos.</div>
<div class="d b" style="left:1130.5px;transform-origin:0 0;top:755.5px;font-size:17.2px;transform:scaleX(1.1313);">Bezeichnung</div>
<div class="d b" style="left:1469.3px;transform-origin:100% 0;top:755.5px;font-size:17.2px;transform:scaleX(1.1375);">USt.</div>
<div class="d b" style="left:1571.3px;transform-origin:100% 0;top:755.5px;font-size:17.2px;transform:scaleX(1.1518);">Menge</div>
<div class="d b" style="left:1698.0px;transform-origin:100% 0;top:755.5px;font-size:17.2px;transform:scaleX(1.1344);">Preis</div>
<div class="d b" style="left:1810.9px;transform-origin:100% 0;top:755.5px;font-size:17.2px;transform:scaleX(1.1401);">Gesamt</div>
<div class="d" style="left:1657.8px;transform-origin:100% 0;top:1009.0px;font-size:17.2px;transform:scaleX(1.1448);">Netto:</div>
<div class="d" style="left:1791.7px;transform-origin:100% 0;top:1009.0px;font-size:17.2px;transform:scaleX(1.1434);">1.510,44 €</div>
<div class="d" style="left:1631.1px;transform-origin:100% 0;top:1033.4px;font-size:17.2px;transform:scaleX(1.1183);">19% USt:</div>
<div class="d" style="left:1806.0px;transform-origin:100% 0;top:1033.4px;font-size:17.2px;transform:scaleX(1.1479);">286,98 €</div>
<div class="d b" style="left:1647.1px;transform-origin:100% 0;top:1056.7px;font-size:17.2px;transform:scaleX(1.1609);">Brutto:</div>
<div class="d b" style="left:1791.7px;transform-origin:100% 0;top:1056.7px;font-size:17.2px;transform:scaleX(1.2591);">1.797,42 €</div>
<div class="d" style="left:1067.5px;transform-origin:0 0;top:1090.5px;font-size:17.2px;transform:scaleX(1.1243);">Rechnungsdatum = Leistungsdatum.</div>
<div class="d" style="left:1067.5px;transform-origin:0 0;top:1143.2px;font-size:17.2px;transform:scaleX(1.1030);">Bitte überweisen den Rechnungsbetrag auf das Konto:</div>
<div class="d" style="left:1067.5px;transform-origin:0 0;top:1182.0px;font-size:13.2px;transform:scaleX(1.1982);">Inhaber:</div>
<div class="d" style="left:1190.4px;transform-origin:0 0;top:1182.0px;font-size:13.2px;transform:scaleX(1.1387);">Max Mustermann</div>
<div class="d" style="left:1375.0px;transform-origin:0 0;top:1182.0px;font-size:13.2px;transform:scaleX(1.2126);">Konto-Nr.:</div>
<div class="d" style="left:1499.0px;transform-origin:0 0;top:1182.0px;font-size:13.2px;transform:scaleX(1.1664);">123456789</div>
<div class="d" style="left:1067.5px;transform-origin:0 0;top:792.6px;font-size:15.6px;transform:scaleX(1.1165);">1</div>
<div class="d b" style="left:1129.0px;transform-origin:0 0;top:792.6px;font-size:15.6px;transform:scaleX(1.1786);">Farbe weis - Eimer 2,5 Liter</div>
<div class="d" style="left:1471.4px;transform-origin:100% 0;top:792.6px;font-size:15.6px;transform:scaleX(1.1243);">19%</div>
<div class="d" style="left:1548.1px;transform-origin:100% 0;top:792.6px;font-size:15.6px;transform:scaleX(1.1073);">5,00 Eimer</div>
<div class="d" style="left:1686.8px;transform-origin:100% 0;top:792.6px;font-size:15.6px;transform:scaleX(1.1493);">60,42 €</div>
<div class="d" style="left:1812.2px;transform-origin:100% 0;top:792.6px;font-size:15.6px;transform:scaleX(1.1400);">302,10 €</div>
<div class="d" style="left:1129.0px;transform-origin:0 0;top:814.2px;font-size:12.6px;transform:scaleX(1.2596);">1 Eimer Farbe mit 2,5 Liter Inhalt.</div>
<div class="d" style="left:1067.5px;transform-origin:0 0;top:834.4px;font-size:15.6px;transform:scaleX(1.1165);">2</div>
<div class="d b" style="left:1129.0px;transform-origin:0 0;top:834.4px;font-size:15.6px;transform:scaleX(1.1789);">Farbe blau - Eimer 2,5 Liter</div>
<div class="d" style="left:1471.4px;transform-origin:100% 0;top:834.4px;font-size:15.6px;transform:scaleX(1.1243);">19%</div>
<div class="d" style="left:1548.1px;transform-origin:100% 0;top:834.4px;font-size:15.6px;transform:scaleX(1.1073);">4,00 Eimer</div>
<div class="d" style="left:1686.8px;transform-origin:100% 0;top:834.4px;font-size:15.6px;transform:scaleX(1.1493);">62,50 €</div>
<div class="d" style="left:1812.2px;transform-origin:100% 0;top:834.4px;font-size:15.6px;transform:scaleX(1.1400);">250,00 €</div>
<div class="d" style="left:1129.0px;transform-origin:0 0;top:856.1px;font-size:12.6px;transform:scaleX(1.2596);">1 Eimer Farbe mit 2,5 Liter Inhalt.</div>
<div class="d" style="left:1067.5px;transform-origin:0 0;top:876.3px;font-size:15.6px;transform:scaleX(1.1165);">3</div>
<div class="d b" style="left:1129.0px;transform-origin:0 0;top:876.3px;font-size:15.6px;transform:scaleX(1.1786);">Farbe weis - Eimer 2,5 Liter</div>
<div class="d" style="left:1471.4px;transform-origin:100% 0;top:876.3px;font-size:15.6px;transform:scaleX(1.1243);">19%</div>
<div class="d" style="left:1539.4px;transform-origin:100% 0;top:876.3px;font-size:15.6px;transform:scaleX(1.1061);">12,00 Eimer</div>
<div class="d" style="left:1686.8px;transform-origin:100% 0;top:876.3px;font-size:15.6px;transform:scaleX(1.1493);">60,42 €</div>
<div class="d" style="left:1812.2px;transform-origin:100% 0;top:876.3px;font-size:15.6px;transform:scaleX(1.1400);">725,04 €</div>
<div class="d" style="left:1129.0px;transform-origin:0 0;top:897.9px;font-size:12.6px;transform:scaleX(1.2596);">1 Eimer Farbe mit 2,5 Liter Inhalt.</div>
<div class="d" style="left:1067.5px;transform-origin:0 0;top:918.1px;font-size:15.6px;transform:scaleX(1.1165);">4</div>
<div class="d b" style="left:1129.0px;transform-origin:0 0;top:918.1px;font-size:15.6px;transform:scaleX(1.1537);">Farbe weis</div>
<div class="d" style="left:1471.4px;transform-origin:100% 0;top:918.1px;font-size:15.6px;transform:scaleX(1.1243);">19%</div>
<div class="d" style="left:1549.8px;transform-origin:100% 0;top:918.1px;font-size:15.6px;transform:scaleX(1.1275);">10,00 Liter</div>
<div class="d" style="left:1686.8px;transform-origin:100% 0;top:918.1px;font-size:15.6px;transform:scaleX(1.1493);">23,33 €</div>
<div class="d" style="left:1812.2px;transform-origin:100% 0;top:918.1px;font-size:15.6px;transform:scaleX(1.1400);">233,30 €</div>
<div class="d" style="left:1129.0px;transform-origin:0 0;top:939.8px;font-size:12.6px;transform:scaleX(1.2217);">Glänzend auch als Starklack, Heizkörperlack verwendbar.</div>
<div class="d" style="left:1129.0px;transform-origin:0 0;top:972.8px;font-size:12.6px;transform:scaleX(1.2275);">Auch für den Wandanstrich geeignet.</div>
</div>
<!-- right scrollbar -->
<div class="a" style="left:2017.5px;top:109.5px;width:20.5px;height:1081.5px;background:#ececec;border-left:1px solid #dadada"></div>
<div class="a" style="left:2024.5px;top:118.5px;border:3.5px solid transparent;border-bottom:4px solid #8b8b8b;border-top:none"></div>
<div class="a" style="left:2024.3px;top:1174px;border:3.7px solid transparent;border-top:4.2px solid #6e6e6e;border-bottom:none"></div>
<div class="a sthumb" style="left:2018.5px;top:130.5px;width:18px;height:649px"></div>
<div class="a grip" style="left:2023.5px;top:450px"></div>


<!-- status bar -->
<div class="t" style="left:5px;top:1206px;font-size:14.2px">Version 2.12.58</div>
<div class="t" style="left:113px;top:1206px;font-size:14.2px;color:#2f7fe6;text-decoration:underline">Fernwartung starten.</div>
<div class="t" style="left:256px;top:1206px;font-size:14.2px">Support: <span style="color:#1f5fd0;text-decoration:underline">office@woax-it.com</span></div>
<div class="t" style="left:452px;top:1206px;font-size:14.2px">Fragen zur Demo? Tel: +43 650 6342878</div>
<div class="t r" style="left:1500px;width:542.5px;top:1206px;font-size:14.45px">WoAx EasyFirma Copyright © 2011-2013, <span style="color:#1f5fd0;text-decoration:underline">WoAx-IT Wolfgang Axamit KG</span></div>
<!-- bottom-left logos -->
<svg class="a" style="left:14px;top:1100px" width="42" height="48" viewBox="0 0 42 48">
 <defs><linearGradient id="eg" x1="0" y1="0" x2="1" y2="1"><stop offset="0" stop-color="#f4f7f9"/><stop offset=".45" stop-color="#cfd9e0"/><stop offset=".55" stop-color="#e8eef2"/><stop offset="1" stop-color="#c5ccd3"/></linearGradient>
 <filter id="ebl"><feGaussianBlur stdDeviation=".45"/></filter>
 <radialGradient id="esh" cx=".5" cy=".5" r=".5"><stop offset="0" stop-color="#1a2f55" stop-opacity=".5"/><stop offset="1" stop-color="#1a2f55" stop-opacity="0"/></radialGradient></defs>
 <ellipse cx="26" cy="43" rx="16" ry="4" fill="url(#esh)"/>
 <g filter="url(#ebl)">
 <path d="M34 7.8 A17 20 0 1 0 35 39.3 L33 31.4 A9.5 9.5 0 1 1 33 16.6Z" fill="#737a82" transform="translate(2.2,.8)"/>
 <path d="M3 19 H12 V23 H3Z M3 26 H12 V30 H3Z" fill="#858c94" transform="translate(1,1.2)"/>
 <path d="M34 7.8 A17 20 0 1 0 35 39.3 L33 31.4 A9.5 9.5 0 1 1 33 16.6Z" fill="url(#eg)"/>
 <path d="M3 19 H14 V23 H3Z M3 26 H14 V30 H3Z" fill="url(#eg)"/>
 <path d="M17.6 19 H30 L29 23 H17.4Z M17.4 26 H29 L28 30 H17.8Z" fill="#d9e0e6"/>
 <path d="M30 19 L32 20 L31 24 L29 23Z M29 26 L31 27 L30 31 L28 30Z M17.6 23 H29 L30.5 24 H18Z M17.8 30 H28 L29.5 31 H18.5Z" fill="#70777f"/>
 </g>
</svg>
<div class="t" style="left:58px;top:1114px;font-size:18.8px;line-height:24px;height:24px;color:#0e1420">Rechnung</div>
<svg class="a" style="left:4px;top:1156px" width="152" height="42" viewBox="0 0 152 42">
 <circle cx="19.7" cy="21.2" r="17.6" fill="#8f0a0a"/>
 <path d="M20 36 H141 Q148.5 36 148.5 31.5 V30.5 Q148.5 26 141 26 H34Z" fill="#8f0a0a"/>
 <path d="M5 25 L10 25 L12.5 11 L16 30 L19.5 15 L23 34 L26.5 19 L28.5 25 L34 25" fill="none" stroke="#e6c4c4" stroke-width="2" stroke-linejoin="round"/>
 <text x="40" y="23.6" font-family="Liberation Sans" font-weight="bold" font-size="25.8" fill="#2b3a2e" textLength="108.5" lengthAdjust="spacingAndGlyphs">WoAx IT</text>
 <text x="58.4" y="32.9" font-family="Liberation Sans" font-weight="bold" font-size="5.6" fill="#fff" textLength="83.6" lengthAdjust="spacingAndGlyphs">SOFTWARE SOLUTIONS</text>
</svg>

</body>
</html>
